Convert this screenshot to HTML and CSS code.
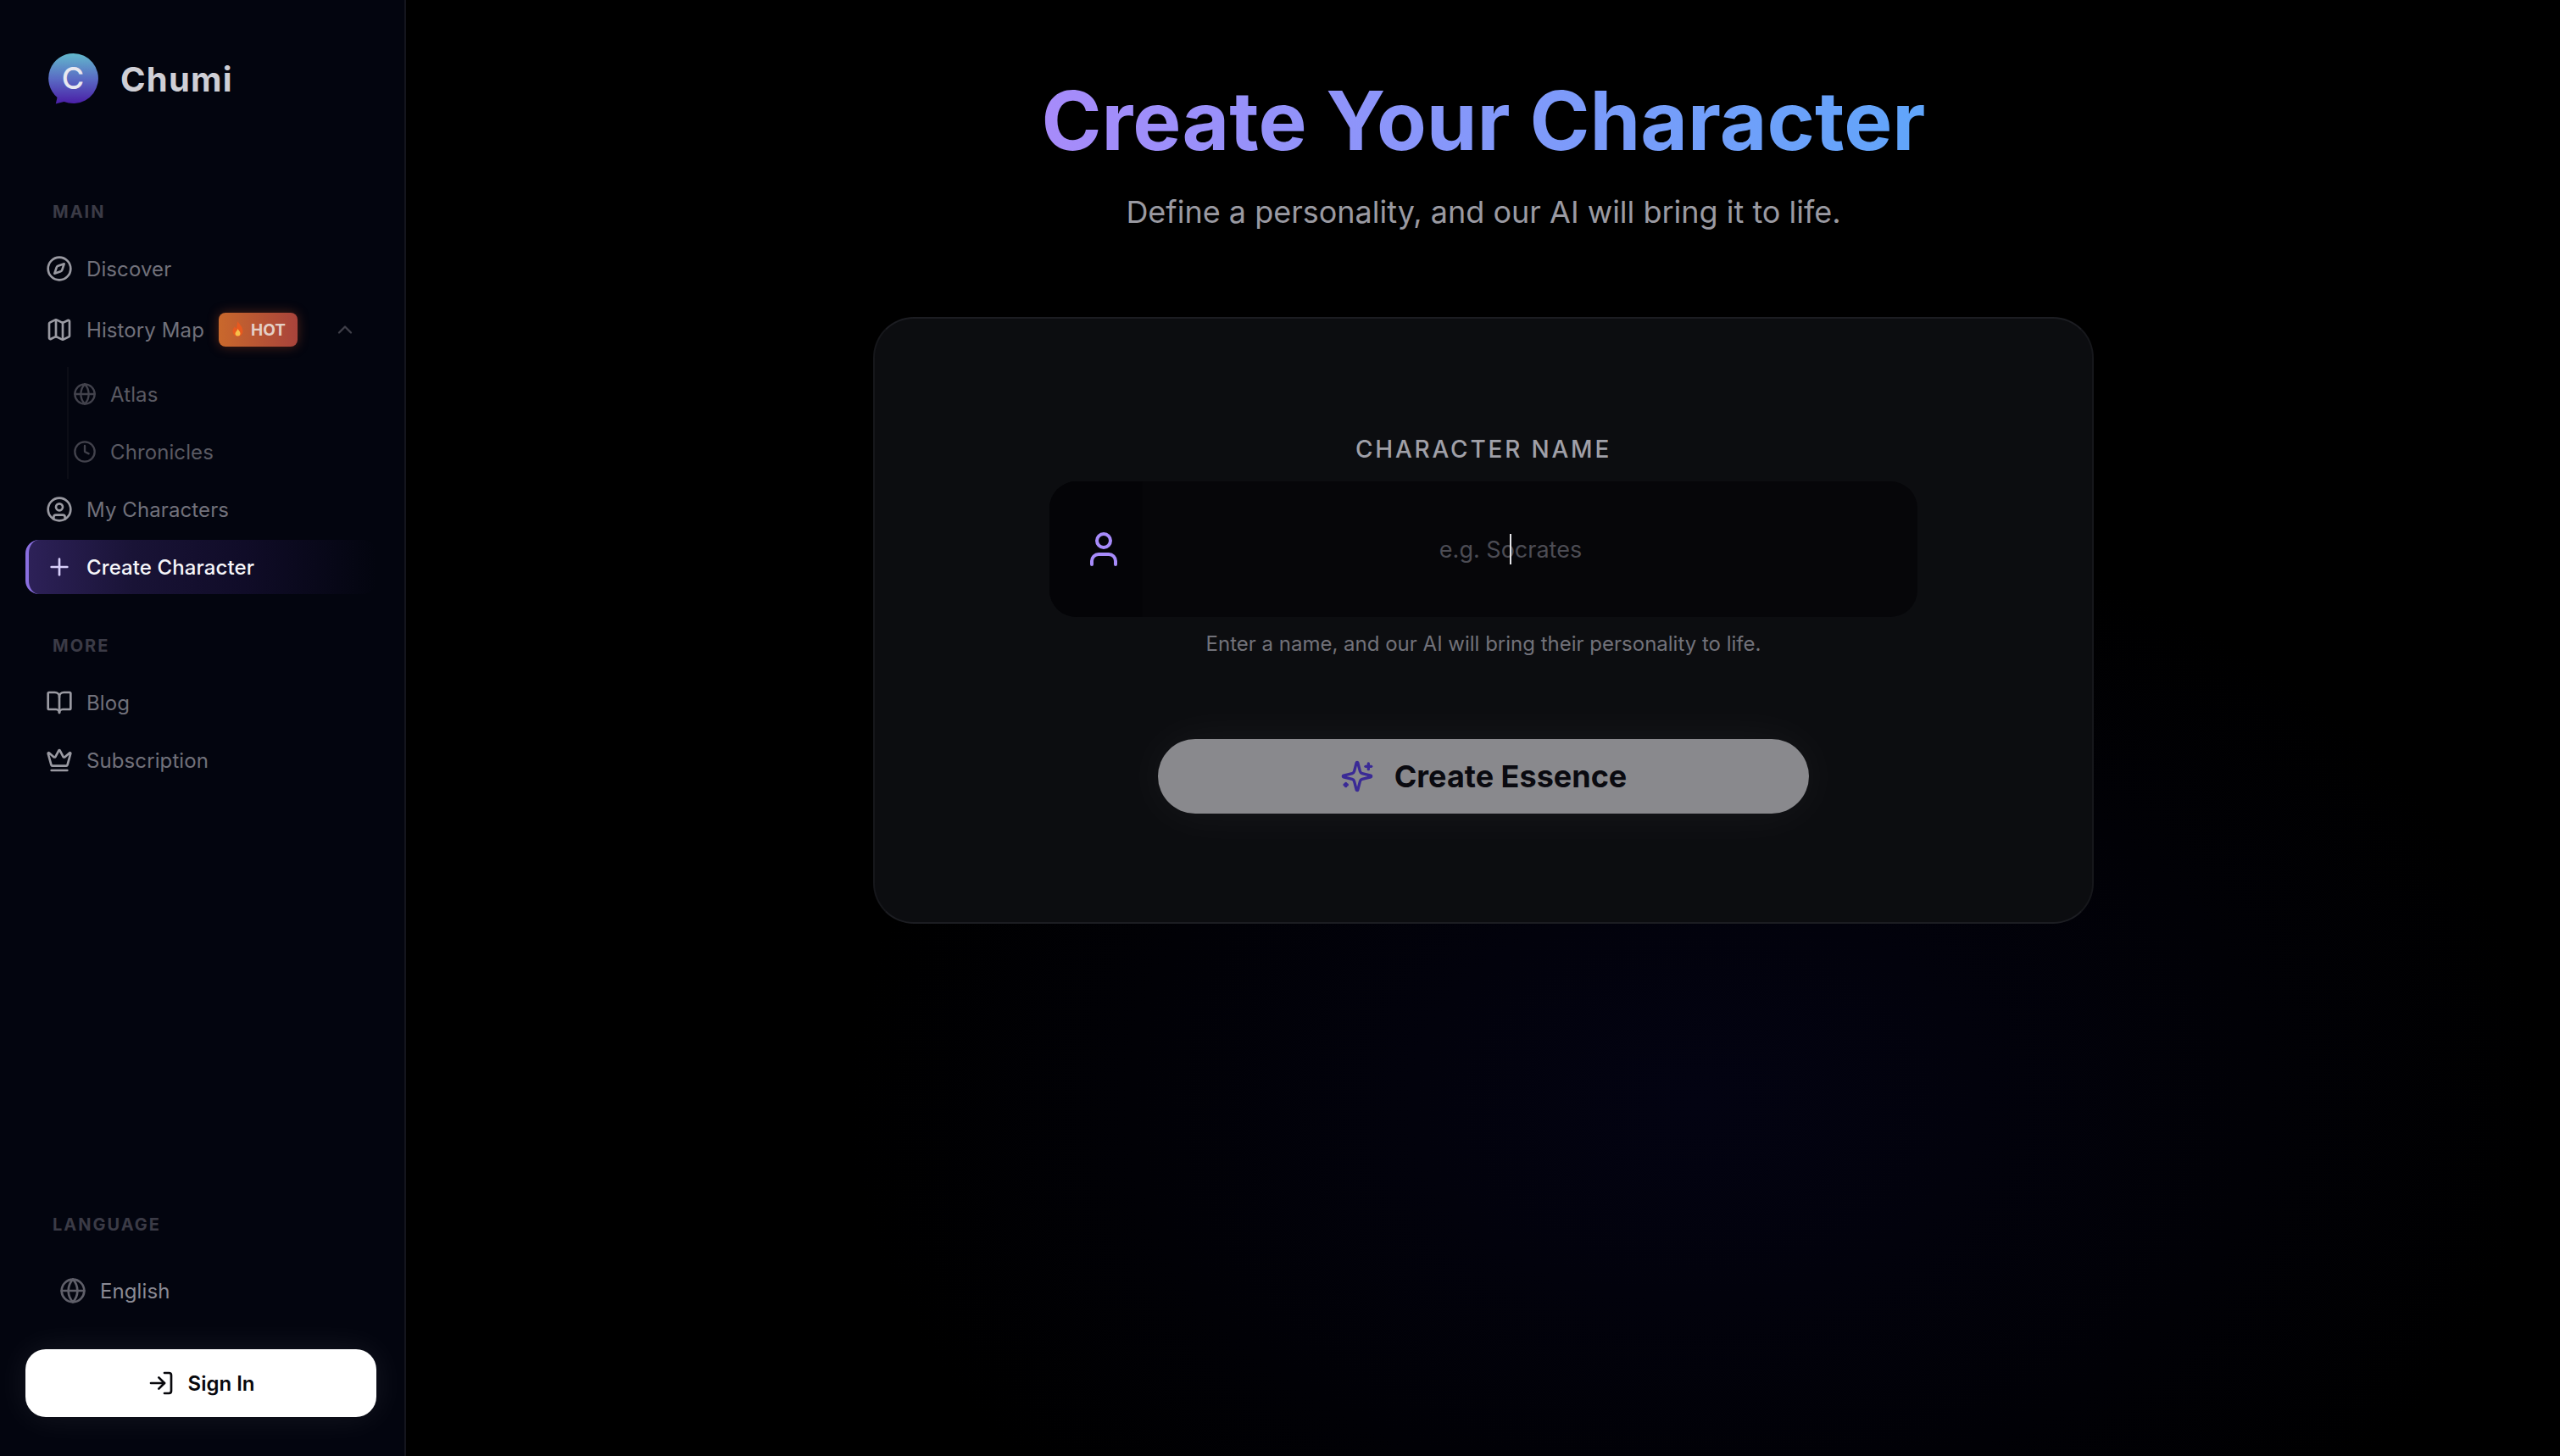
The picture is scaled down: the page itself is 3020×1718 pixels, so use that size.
FILE: index.html
```html
<!DOCTYPE html>
<html lang="en">
<head>
    <meta charset="UTF-8">
    <meta name="viewport" content="width=device-width, initial-scale=1.0">
    <title>Chumi - Create Your Character</title>
    <link rel="stylesheet" href="styles.css">
</head>
<body>
    <aside class="sidebar">
        <div class="brand">
            <svg class="brand-logo" viewBox="0 0 60 60">
                <defs>
                    <linearGradient id="logoFill" x1="0" y1="0" x2="0" y2="1">
                        <stop offset="0" stop-color="#62b9cc"/>
                        <stop offset="0.5" stop-color="#5a6cc4"/>
                        <stop offset="1" stop-color="#4a1ea6"/>
                    </linearGradient>
                </defs>
                <path d="M29.500 0a29.500 29.500 0 1 1-11 56.900L8.800 59.500l1.700-7.600A29.500 29.500 0 0 1 29.500 0z" fill="url(#logoFill)"/>
                <text x="29" y="42" text-anchor="middle" class="brand-letter">C</text>
            </svg>
            <span class="brand-name">Chumi</span>
        </div>

        <div class="section-label section-main">MAIN</div>
        <nav class="nav">
            <a class="nav-item">
                <svg class="icon" viewBox="0 0 24 24"><circle cx="12" cy="12" r="10"/><path d="m16.240 7.760-1.804 5.411a2 2 0 0 1-1.265 1.265L7.760 16.240l1.804-5.411a2 2 0 0 1 1.265-1.265z"/></svg>
                <span>Discover</span>
            </a>
            <a class="nav-item nav-item-map">
                <svg class="icon" viewBox="0 0 24 24"><path d="M14.106 5.553a2 2 0 0 0 1.788 0l3.659-1.830A1 1 0 0 1 21 4.619v12.764a1 1 0 0 1-.553.894l-4.553 2.277a2 2 0 0 1-1.788 0l-4.212-2.106a2 2 0 0 0-1.788 0l-3.659 1.830A1 1 0 0 1 3 19.381V6.618a1 1 0 0 1 .553-.894l4.553-2.277a2 2 0 0 1 1.788 0z"/><path d="M15 5.764v15"/><path d="M9 3.236v15"/></svg>
                <span>History Map</span>
                <span class="hot-badge">
                    <svg class="flame" viewBox="0 0 16 20"><path d="M8 0c1 3 6 6 6 12a6 6 0 0 1-12 0c0-3 1.500-4.500 2.500-6 .5 1.500 1 2 2 2.500C7 6 7 3 8 0z" fill="#e8591f"/><path d="M8 9c.6 2 3 3 3 5.500a3 3 0 0 1-6 0C5 12.500 7.300 11.500 8 9z" fill="#f7c04a"/></svg>
                    HOT
                </span>
                <svg class="chevron" viewBox="0 0 24 24"><path d="m18 15-6-6-6 6"/></svg>
            </a>
            <div class="sub-nav">
                <a class="sub-item">
                    <svg class="icon icon-sub" viewBox="0 0 24 24"><circle cx="12" cy="12" r="10"/><path d="M12 2a14.500 14.500 0 0 0 0 20 14.500 14.500 0 0 0 0-20"/><path d="M2 12h20"/></svg>
                    <span>Atlas</span>
                </a>
                <a class="sub-item">
                    <svg class="icon icon-sub" viewBox="0 0 24 24"><circle cx="12" cy="12" r="10"/><path d="M12 6v6l4 2"/></svg>
                    <span>Chronicles</span>
                </a>
            </div>
            <a class="nav-item">
                <svg class="icon" viewBox="0 0 24 24"><circle cx="12" cy="12" r="10"/><circle cx="12" cy="10" r="3"/><path d="M7 20.662V19a2 2 0 0 1 2-2h6a2 2 0 0 1 2 2v1.662"/></svg>
                <span>My Characters</span>
            </a>
            <a class="nav-item active">
                <svg class="icon" viewBox="0 0 24 24"><path d="M5 12h14"/><path d="M12 5v14"/></svg>
                <span>Create Character</span>
            </a>
        </nav>

        <div class="section-label section-more">MORE</div>
        <nav class="nav">
            <a class="nav-item">
                <svg class="icon" viewBox="0 0 24 24"><path d="M12 7v14"/><path d="M3 18a1 1 0 0 1-1-1V4a1 1 0 0 1 1-1h5a4 4 0 0 1 4 4 4 4 0 0 1 4-4h5a1 1 0 0 1 1 1v13a1 1 0 0 1-1 1h-6a3 3 0 0 0-3 3 3 3 0 0 0-3-3z"/></svg>
                <span>Blog</span>
            </a>
            <a class="nav-item">
                <svg class="icon" viewBox="0 0 24 24"><path d="M11.562 3.266a.5.500 0 0 1 .876 0L15.390 8.870a1 1 0 0 0 1.516.294L21.183 5.500a.5.500 0 0 1 .798.519l-2.834 10.246a1 1 0 0 1-.956.734H5.810a1 1 0 0 1-.957-.734L2.020 6.020a.5.500 0 0 1 .798-.519l4.276 3.664a1 1 0 0 0 1.516-.294z"/><path d="M5 21h14"/></svg>
                <span>Subscription</span>
            </a>
        </nav>

        <div class="sidebar-bottom">
            <div class="section-label">LANGUAGE</div>
            <a class="lang-item">
                <svg class="icon" viewBox="0 0 24 24"><circle cx="12" cy="12" r="10"/><path d="M12 2a14.500 14.500 0 0 0 0 20 14.500 14.500 0 0 0 0-20"/><path d="M2 12h20"/></svg>
                <span>English</span>
            </a>
            <button class="signin-btn">
                <svg class="icon" viewBox="0 0 24 24"><path d="M15 3h4a2 2 0 0 1 2 2v14a2 2 0 0 1-2 2h-4"/><path d="m10 17 5-5-5-5"/><path d="M15 12H3"/></svg>
                Sign In
            </button>
        </div>
    </aside>

    <main class="main">
        <h1 class="page-title">Create Your Character</h1>
        <p class="page-subtitle">Define a personality, and our AI will bring it to life.</p>

        <form class="card">
            <label class="field-label" for="charName">CHARACTER NAME</label>
            <div class="name-field">
                <div class="name-icon">
                    <svg viewBox="0 0 24 24"><path d="M19 21v-2a4 4 0 0 0-4-4H9a4 4 0 0 0-4 4v2"/><circle cx="12" cy="7" r="4"/></svg>
                </div>
                <div class="name-input" id="charName">e.g. Socrates<span class="caret"></span></div>
            </div>
            <p class="field-help">Enter a name, and our AI will bring their personality to life.</p>
            <button type="button" class="create-btn">
                <svg viewBox="0 0 24 24"><path d="M9.937 15.500A2 2 0 0 0 8.500 14.063l-6.135-1.582a.5.500 0 0 1 0-.962L8.500 9.936A2 2 0 0 0 9.937 8.500l1.582-6.135a.5.500 0 0 1 .963 0L14.063 8.500A2 2 0 0 0 15.500 9.937l6.135 1.581a.5.500 0 0 1 0 .964L15.500 14.063a2 2 0 0 0-1.437 1.437l-1.582 6.135a.5.500 0 0 1-.963 0z"/><path d="M20 3v4"/><path d="M22 5h-4"/><path d="M4 17v2"/><path d="M5 18H3"/></svg>
                Create Essence
            </button>
        </form>
    </main>
</body>
</html>
```

FILE: styles.css
```css
* {
    box-sizing: border-box;
}
body {
    font-family: Inter, "Noto Sans", sans-serif;
    background: radial-gradient(ellipse 1000px 700px at 2000px 1300px, #030312, #000 100%);
    display: flex;
    height: 100vh;
    margin: 0;
    overflow: hidden;
}
a {
    color: inherit;
    text-decoration: none;
}
.sidebar {
    width: 479px;
    flex-shrink: 0;
    background-color: #03050f;
    border-right: 2px solid #14151d;
    padding: 0 33px 46px 30px;
    display: flex;
    flex-direction: column;
}
.brand {
    display: flex;
    align-items: center;
    gap: 25px;
    padding: 63px 0 0 27px;
}
.brand-logo {
    width: 60px;
    height: 60px;
    flex-shrink: 0;
}
.brand-letter {
    font-family: Inter, sans-serif;
    font-size: 36px;
    font-weight: 500;
    fill: #e8e8f0;
}
.brand-name {
    font-size: 40px;
    font-weight: 700;
    letter-spacing: 1.200px;
    color: #cfcfd6;
}
.section-label {
    font-size: 20px;
    font-weight: 700;
    letter-spacing: 2px;
    color: #3b3b46;
    padding-left: 32px;
    line-height: 24px;
}
.section-main {
    margin-top: 115px;
    margin-bottom: 23px;
}
.section-more {
    margin-top: 49px;
    margin-bottom: 23px;
}
.nav {
    display: flex;
    flex-direction: column;
    gap: 4px;
}
.nav-item {
    height: 64px;
    display: flex;
    align-items: center;
    gap: 16px;
    padding-left: 24px;
    font-size: 24px;
    font-weight: 400;
    letter-spacing: 0.100px;
    color: #71717b;
    border-radius: 16px;
}
.nav-item-map {
    margin-top: 4px;
}
.icon {
    width: 32px;
    height: 32px;
    flex-shrink: 0;
    fill: none;
    stroke: #9a9aa2;
    stroke-width: 2;
    stroke-linecap: round;
    stroke-linejoin: round;
}
.nav-item.active {
    background: linear-gradient(90deg, #2d2158 0%, #191336 30%, #100c28 62%, #03050f 100%);
    border-left: 4px solid #8a6fe0;
    padding-left: 20px;
    color: #f6f6fa;
    font-weight: 500;
}
.nav-item.active .icon {
    stroke: #d9d0fb;
}
.hot-badge {
    height: 40px;
    margin-left: 1px;
    padding: 0 14px;
    display: flex;
    align-items: center;
    gap: 7px;
    border-radius: 8px;
    background: linear-gradient(90deg, #c9682c, #a8433b);
    box-shadow: 0 0 14px rgba(220, 90, 40, 0.35);
    color: #e4cfc6;
    font-size: 19px;
    font-weight: 700;
    letter-spacing: 0;
}
.flame {
    width: 17px;
    height: 20px;
}
.chevron {
    width: 28px;
    height: 28px;
    margin-left: 26px;
    fill: none;
    stroke: #3f3f49;
    stroke-width: 2;
    stroke-linecap: round;
    stroke-linejoin: round;
}
.sub-nav {
    margin: 8px 0 0 49px;
    border-left: 2px solid #0c0d16;
    display: flex;
    flex-direction: column;
    gap: 4px;
}
.sub-item {
    height: 64px;
    display: flex;
    align-items: center;
    gap: 16px;
    padding-left: 5px;
    font-size: 24px;
    letter-spacing: 0.100px;
    color: #5a5a63;
}
.icon-sub {
    width: 28px;
    height: 28px;
    stroke: #42424c;
}
.sidebar-bottom {
    margin-top: auto;
}
.lang-item {
    height: 64px;
    margin-top: 34px;
    padding-left: 40px;
    display: flex;
    align-items: center;
    gap: 16px;
    font-size: 24px;
    letter-spacing: 0.100px;
    color: #8a8a94;
}
.lang-item .icon {
    stroke: #5f5f69;
}
.signin-btn {
    width: 414px;
    height: 80px;
    margin-top: 37px;
    display: flex;
    align-items: center;
    justify-content: center;
    gap: 16px;
    border: none;
    border-radius: 24px;
    background-color: #fff;
    box-shadow: 0 0 40px rgba(255, 255, 255, 0.08);
    font-family: inherit;
    font-size: 24px;
    font-weight: 600;
    color: #08080c;
}
.signin-btn .icon {
    stroke: #08080c;
}
.main {
    flex: 1;
    display: flex;
    flex-direction: column;
    align-items: center;
    padding: 84px 0 0 1px;
}
.page-title {
    margin: 0;
    font-size: 96px;
    font-weight: 700;
    line-height: 116px;
    background: linear-gradient(90deg, #a78bfa, #60a5fa);
    -webkit-background-clip: text;
    background-clip: text;
    color: transparent;
}
.page-subtitle {
    margin: 28px 0 0;
    font-size: 36px;
    line-height: 44px;
    color: #9a9aa2;
}
.card {
    width: 1440px;
    height: 716px;
    margin-top: 102px;
    padding-top: 132px;
    display: flex;
    flex-direction: column;
    align-items: center;
    background-color: #0c0d10;
    border: 2px solid #1c1d22;
    border-left-color: #16171b;
    border-right-color: #16171b;
    border-radius: 48px;
}
.field-label {
    font-size: 28px;
    font-weight: 500;
    letter-spacing: 2.800px;
    line-height: 44px;
    color: #a0a0a8;
}
.name-field {
    width: 1024px;
    height: 160px;
    margin-top: 16px;
    display: flex;
    background-color: #060609;
    border-radius: 32px;
    overflow: hidden;
}
.name-icon {
    width: 110px;
    padding-left: 18px;
    display: flex;
    align-items: center;
    justify-content: center;
    background-color: #040407;
}
.name-icon svg {
    width: 48px;
    height: 48px;
    fill: none;
    stroke: #a78bfa;
    stroke-width: 2;
    stroke-linecap: round;
    stroke-linejoin: round;
}
.name-input {
    flex: 1;
    position: relative;
    padding-right: 46px;
    display: flex;
    align-items: center;
    justify-content: center;
    font-size: 27px;
    color: #4c4c54;
}
.caret {
    position: absolute;
    top: 62px;
    left: 433px;
    width: 2px;
    height: 36px;
    background-color: #e4e4e8;
}
.field-help {
    margin: 14px 0 0;
    font-size: 24px;
    line-height: 36px;
    color: #72727a;
}
.create-btn {
    width: 768px;
    height: 88px;
    margin-top: 94px;
    display: flex;
    align-items: center;
    justify-content: center;
    gap: 24px;
    border: none;
    border-radius: 44px;
    background-color: #89898d;
    box-shadow: 0 0 60px rgba(255, 255, 255, 0.05);
    font-family: inherit;
    font-size: 36px;
    font-weight: 700;
    color: #0a0a10;
}
.create-btn svg {
    width: 40px;
    height: 40px;
    fill: none;
    stroke: #3a2a96;
    stroke-width: 2;
    stroke-linecap: round;
    stroke-linejoin: round;
}
```
